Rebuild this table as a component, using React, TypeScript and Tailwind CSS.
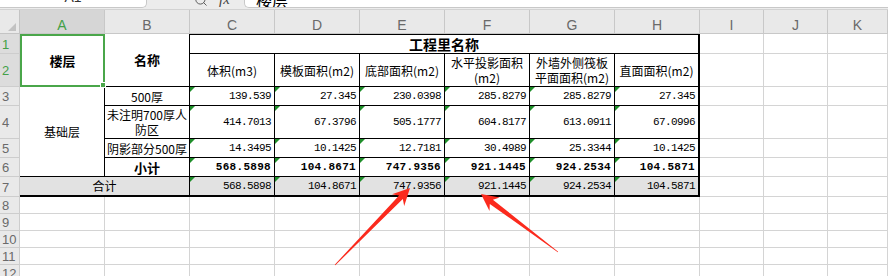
import React from 'react';
import { Search } from 'lucide-react';

const cols = ['A', 'B', 'C', 'D', 'E', 'F', 'G', 'H', 'I', 'J', 'K'];

const heads: string[][] = [
  ['体积(m3)'],
  ['模板面积(m2)'],
  ['底部面积(m2)'],
  ['水平投影面积', '(m2)'],
  ['外墙外侧筏板', '平面面积(m2)'],
  ['直面面积(m2)'],
];

const body = [
  { name: ['500厚'], vals: ['139.539', '27.345', '230.0398', '285.8279', '285.8279', '27.345'] },
  { name: ['未注明700厚人', '防区'], vals: ['414.7013', '67.3796', '505.1777', '604.8177', '613.0911', '67.0996'] },
  { name: ['阴影部分500厚'], vals: ['14.3495', '10.1425', '12.7181', '30.4989', '25.3344', '10.1425'] },
  { name: ['小计'], bold: true, vals: ['568.5898', '104.8671', '747.9356', '921.1445', '924.2534', '104.5871'] },
];

const total = ['568.5898', '104.8671', '747.9356', '921.1445', '924.2534', '104.5871'];

const numFont = "font-['Liberation_Mono',monospace] text-[11px]";

// snip-tool style arrow: thin tail widening to a swept head
function arrowPoints(tx: number, ty: number, px: number, py: number) {
  const dx = px - tx;
  const dy = py - ty;
  const len = Math.hypot(dx, dy);
  const ux = dx / len;
  const uy = dy / len;
  const nx = -uy;
  const ny = ux;
  const head = 16;
  const hw = 8.5;
  const sw = 2.6;
  const back = 3;
  const bx = px - ux * head;
  const by = py - uy * head;
  const p = (x: number, y: number) => `${x.toFixed(1)},${y.toFixed(1)}`;
  return [
    p(tx + nx * 0.4, ty + ny * 0.4),
    p(bx + ux * back + nx * sw, by + uy * back + ny * sw),
    p(bx + nx * hw - ux, by + ny * hw - uy),
    p(px, py),
    p(bx - nx * hw - ux, by - ny * hw - uy),
    p(bx + ux * back - nx * sw, by + uy * back - ny * sw),
    p(tx - nx * 0.4, ty - ny * 0.4),
  ].join(' ');
}

const Tri = () => (
  <span className="absolute left-0 top-0 h-0 w-0 border-t-[5px] border-r-[5px] border-t-[#1f8f2a] border-r-transparent" />
);

const Empty = () => <div className="border-r border-b border-[#d4d4d4]" />;

const RowHead = ({ n, active }: { n: number; active?: boolean }) => (
  <div
    className={`flex items-center pl-[2px] pt-[1px] border-r border-b border-[#cdcdcd] font-['Liberation_Sans',sans-serif] text-[13px] leading-none ${
      active ? 'bg-[#dcdcdc] text-[#43a047]' : 'bg-[#e9e9e9] text-[#6a6a6a]'
    }`}
  >
    {n}
  </div>
);

export default function App() {
  const cells: React.ReactNode[] = [];

  // column header row
  cells.push(
    <div key="corner" className="flex items-end justify-end pr-[3px] pb-[2px] bg-[#e9e9e9] border-r border-b border-[#c4c4c4]">
      <span className="h-0 w-0 border-l-[8px] border-b-[8px] border-l-transparent border-b-[#c2c2c2]" />
    </div>
  );
  cols.forEach((c) =>
    cells.push(
      <div
        key={c}
        className={`flex items-center justify-center pt-[7px] border-r border-b border-[#c8c8c8] font-['Liberation_Sans',sans-serif] text-[14px] leading-none ${
          c === 'A' ? 'bg-[#d6d6d6] text-[#43a047]' : 'bg-[#e9e9e9] text-[#6a6a6a]'
        }`}
      >
        {c}
      </div>
    )
  );

  // row 1
  cells.push(<RowHead key="r1" n={1} active />);
  cells.push(
    <div key="a1" className="relative z-10 row-span-2 flex items-center justify-center border-2 border-[#4aa64a] text-[13px] font-bold">
      楼层
      <span className="absolute -right-[3px] -bottom-[3px] h-[6px] w-[6px] border border-white bg-[#4aa64a]" />
    </div>
  );
  cells.push(
    <div key="b1" className="row-span-2 flex items-center justify-center border-r border-b border-black text-[13px] font-bold">
      名称
    </div>
  );
  cells.push(
    <div key="c1" className="col-span-6 flex items-center justify-center border-t border-b border-r-2 border-black text-[14px] font-bold">
      工程里名称
    </div>
  );
  cells.push(<Empty key="e1a" />, <Empty key="e1b" />, <Empty key="e1c" />);

  // row 2
  cells.push(<RowHead key="r2" n={2} active />);
  heads.forEach((h, i) =>
    cells.push(
      <div
        key={`h${i}`}
        className={`flex flex-col items-center justify-center whitespace-nowrap border-b border-black text-[12px] leading-[15px] ${
          i === 5 ? 'border-r-2' : 'border-r'
        }`}
      >
        {h.map((line) => (
          <span key={line}>{line}</span>
        ))}
      </div>
    )
  );
  cells.push(<Empty key="e2a" />, <Empty key="e2b" />, <Empty key="e2c" />);

  // rows 3-6
  body.forEach((row, r) => {
    cells.push(<RowHead key={`r${r + 3}`} n={r + 3} />);
    if (r === 0) {
      cells.push(
        <div key="a3" className="row-span-4 flex items-center justify-center border-r border-b border-black text-[12px]">
          基础层
        </div>
      );
    }
    cells.push(
      <div
        key={`b${r}`}
        className={`flex flex-col items-center justify-center whitespace-nowrap border-r border-b border-black leading-[15px] ${
          row.bold ? 'text-[13px] font-bold' : 'text-[12px]'
        }`}
      >
        {row.name.map((line) => (
          <span key={line}>{line}</span>
        ))}
      </div>
    );
    row.vals.forEach((v, i) =>
      cells.push(
        <div
          key={`v${r}-${i}`}
          className={`relative flex items-center justify-end pr-[3px] border-b border-black ${numFont} ${
            row.bold ? 'font-bold tracking-[0.3px]' : 'tracking-[-0.6px]'
          } ${i === 5 ? 'border-r-2' : 'border-r'}`}
        >
          <Tri />
          {v}
        </div>
      )
    );
    cells.push(<Empty key={`e${r}a`} />, <Empty key={`e${r}b`} />, <Empty key={`e${r}c`} />);
  });

  // row 7
  cells.push(<RowHead key="r7" n={7} />);
  cells.push(
    <div key="a7" className="col-span-2 flex items-center justify-center bg-[#e2e2e2] border-r border-b-2 border-black text-[12px]">
      合计
    </div>
  );
  total.forEach((v, i) =>
    cells.push(
      <div
        key={`t${i}`}
        className={`relative flex items-center justify-end pr-[3px] bg-[#e2e2e2] border-b-2 border-black tracking-[-0.6px] ${numFont} ${
          i === 5 ? 'border-r-2' : 'border-r'
        }`}
      >
        <Tri />
        {v}
      </div>
    )
  );
  cells.push(<Empty key="e7a" />, <Empty key="e7b" />, <Empty key="e7c" />);

  // empty rows
  [8, 9, 10, 11, 12].forEach((n) => {
    cells.push(<RowHead key={`r${n}`} n={n} />);
    cols.forEach((c) => cells.push(<Empty key={`${n}${c}`} />));
  });

  return (
    <div className="relative h-[276px] w-[888px] overflow-hidden bg-white font-['Noto_Sans_CJK_SC',sans-serif] text-black">
      {/* formula bar, mostly scrolled off */}
      <div className="flex h-[10px] items-start overflow-hidden border-b border-[#d2d2d2] bg-[#ececec]">
        <div className="flex h-[8px] w-[147px] justify-center overflow-hidden rounded-br-[5px] border-r border-b border-[#c8c8c8] bg-white">
          <span className="-mt-[11px] font-['Liberation_Sans',sans-serif] text-[14px] leading-[16px] text-[#333]">A1</span>
        </div>
        <div className="flex w-[97px] items-start">
          <Search size={14} strokeWidth={1.6} className="ml-[47px] -mt-[7px] text-[#555]" />
          <span className="ml-[11px] -mt-[9px] font-['Liberation_Serif',serif] text-[15px] italic leading-[16px] text-[#444]">fx</span>
        </div>
        <div className="h-[8px] flex-1 overflow-hidden rounded-bl-[5px] border-l border-b border-[#c8c8c8] bg-white pl-[11px]">
          <span className="-mt-[8px] block text-[16px] leading-[16px]">楼层</span>
        </div>
      </div>

      <div className="grid grid-cols-[20px_repeat(8,85px)_64px_64px_1fr] grid-rows-[24px_20px_33px_19px_33px_19px_19px_20px_17px_17px_17px_17px_17px]">
        {cells}
      </div>

      <svg className="pointer-events-none absolute inset-0" width={888} height={276}>
        <polygon points={arrowPoints(335, 265, 410, 188)} fill="#fb2a1d" />
        <polygon points={arrowPoints(558, 252, 481, 194)} fill="#fb2a1d" />
      </svg>
    </div>
  );
}
